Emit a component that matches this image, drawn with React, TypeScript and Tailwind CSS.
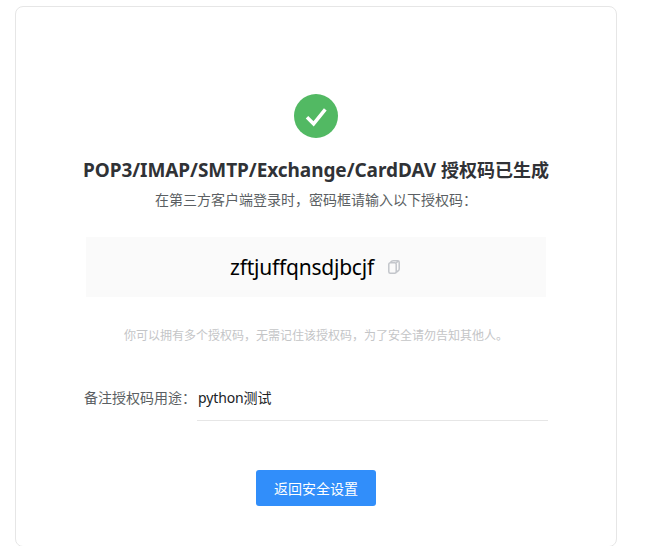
const cn = "font-['Noto_Sans','Noto_Sans_CJK_SC',sans-serif]";

export default function App() {
  return (
    <main className={`h-[546px] overflow-hidden bg-white px-[15px] pt-[6px] text-[#5b5f63] ${cn}`}>
      <section className="flex h-[541px] w-[602px] flex-col items-center rounded-[8px] border border-[#e6e6e6] pt-[87px]">
        <svg className="h-11 w-11 shrink-0" viewBox="0 0 44 44" fill="none">
          <circle cx="22" cy="22" r="22" fill="#52b963" />
          <path d="M13 23.2L19.6 29.8L31.3 15.3" stroke="white" strokeWidth="3.5" />
        </svg>
        <h1 className="mt-[18px] flex h-7 w-[466px] justify-between whitespace-nowrap text-[18px] font-bold leading-7 text-[#303236]">
          <span className="text-[19px] tracking-[-.06px]">POP3/IMAP/SMTP/Exchange/CardDAV</span>
          <span>授权码已生成</span>
        </h1>
        <p className="mt-[6px] h-5 text-[14px] leading-5">在第三方客户端登录时，密码框请输入以下授权码：</p>
        <div className="mt-[27px] flex h-[60px] w-[460px] items-center bg-[#fafafa] pl-[144px]">
          <span className="w-[146px] whitespace-nowrap pt-0.5 text-[21px] tracking-[-.22px] text-black">zftjuffqnsdjbcjf</span>
          <svg className="ml-3 h-[14px] w-3" viewBox="0 0 12 14" fill="none" stroke="#c3c6cb" strokeWidth="1.5">
            <rect x=".8" y="2.8" width="7.4" height="10.4" rx="1.5" />
            <path d="M2.5 2.3L3.8 1.2Q4.4 .8 5.2 .8H9.8Q11.2 .8 11.2 2.2V9Q11.2 9.8 10.6 10.4L8.3 12.5M8 3L10.5 1" />
          </svg>
        </div>
        <p className="mt-[29px] h-5 text-[12px] leading-5 text-[#c4c5c7]">你可以拥有多个授权码，无需记住该授权码，为了安全请勿告知其他人。</p>
        <label className="mt-[30px] flex h-[45px] w-[464px] text-[14px] leading-[44px]">
          <span className="w-[113px]">备注授权码用途：</span>
          <span className="flex-1 border-b border-[#e6e6e6] pl-px text-[#202225]"><span className="tracking-[-.12px]">python</span>测试</span>
        </label>
        <button className="mt-[49px] h-9 w-[120px] rounded-[3px] bg-[#318efa] text-[14px] text-white">返回安全设置</button>
      </section>
    </main>
  );
}
